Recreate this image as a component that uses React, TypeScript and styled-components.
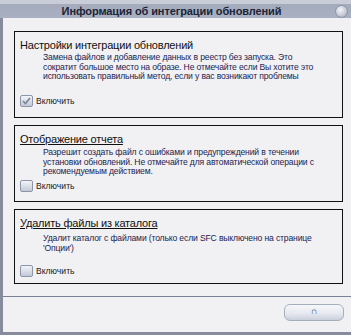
import React from 'react';
import styled, { createGlobalStyle } from 'styled-components';

const GlobalStyle = createGlobalStyle`
  html, body {
    margin: 0;
    padding: 0;
    background: #f1f1f4;
  }
  body {
    font-family: "Liberation Sans", Arial, sans-serif;
  }
`;

const Window = styled.div`
  width: 351px;
  height: 335px;
  box-sizing: border-box;
  display: flex;
  flex-direction: column;
  background: #f1f1f4;
  overflow: hidden;
`;

const TitleBar = styled.div`
  height: 14px;
  flex: none;
  border-top: 4px solid #c9cdd8;
  background: linear-gradient(#a4abbd, #a9b0c2);
  display: flex;
  align-items: center;
  justify-content: center;
  position: relative;
`;

const Title = styled.div`
  font-size: 11px;
  font-weight: bold;
  color: #1c2436;
  letter-spacing: -0.1px;
  margin-left: -8px;
`;

const Orb = styled.div`
  position: absolute;
  right: 3px;
  top: 1px;
  width: 11px;
  height: 11px;
  border-radius: 50%;
  border: 1px solid #8c94a6;
  background: radial-gradient(circle at 40% 35%, #f4f5f8 0%, #c8ccd6 55%, #9aa2b4 100%);
`;

const Body = styled.div`
  flex: 1;
  display: flex;
  flex-direction: column;
  border-left: 3px solid #868c9e;
  border-bottom: 3px solid #868c9e;
`;

const Content = styled.div`
  flex: 1;
  display: flex;
  flex-direction: column;
  gap: 7px;
  padding: 13px 8px 0 11px;
`;

const Section = styled.div<{ $h: number }>`
  height: ${p => p.$h}px;
  box-sizing: border-box;
  border: 1px solid #111;
  padding: 6px 0 0 5px;
  display: flex;
  flex-direction: column;
`;

const Heading = styled.div<{ $link?: boolean }>`
  font-size: 11px;
  line-height: 14px;
  color: #101010;
  text-decoration: ${p => (p.$link ? 'underline' : 'none')};
  letter-spacing: -0.2px;
`;

const Desc = styled.div<{ $mt?: number }>`
  font-size: 8.6px;
  line-height: 9.6px;
  color: #1c2450;
  margin: ${p => p.$mt ?? 1}px 0 0 23px;
  letter-spacing: -0.15px;
  flex: 1;
`;

const CheckRow = styled.label<{ $mb: number }>`
  display: flex;
  align-items: center;
  gap: 3px;
  font-size: 8.6px;
  color: #1a1a1a;
  margin-bottom: ${p => p.$mb}px;
`;

const Box = styled.span`
  width: 11px;
  height: 10px;
  border: 1px solid #8c96aa;
  border-radius: 2px;
  background: linear-gradient(#f2f4f8, #c2c9d6);
  display: flex;
  align-items: center;
  justify-content: center;
`;

const Footer = styled.div`
  height: 36px;
  flex: none;
  border-top: 1px solid #7c8296;
  display: flex;
  justify-content: flex-end;
  align-items: flex-start;
  padding: 7px 7px 0 0;
  box-sizing: border-box;
`;

const Button = styled.button`
  width: 60px;
  height: 17px;
  border: 1px solid #a6aebe;
  border-radius: 6px;
  background: linear-gradient(#f6f7fa 0%, #e6e9ef 55%, #c9d0dc 100%);
  font-family: "Liberation Sans", Arial, sans-serif;
  font-size: 9px;
  line-height: 9px;
  color: #3a4a80;
  padding: 2px 0 0;
  display: flex;
  justify-content: center;
  align-items: flex-start;
`;

const Check = () => (
  <svg width="9" height="8" viewBox="0 0 9 8">
    <path d="M1 4 L3.5 6.5 L8 1" fill="none" stroke="#7a8294" strokeWidth="1.6" />
  </svg>
);

export default function App() {
  return (
    <>
      <GlobalStyle />
      <Window>
        <TitleBar>
          <Title>Информация об интеграции обновлений</Title>
          <Orb />
        </TitleBar>
        <Body>
          <Content>
            <Section $h={87}>
              <Heading>Настройки интеграции обновлений</Heading>
              <Desc>
                Замена файлов и добавление данных в реестр без запуска. Это
                <br />
                сократит большое место на образе. Не отмечайте если Вы хотите это
                <br />
                использовать правильный метод, если у вас возникают проблемы
              </Desc>
              <CheckRow $mb={10}>
                <Box>
                  <Check />
                </Box>
                Включить
              </CheckRow>
            </Section>
            <Section $h={77}>
              <Heading $link>Отображение отчета</Heading>
              <Desc $mt={2}>
                Разрешит создать файл с ошибками и предупреждений в течении
                <br />
                установки обновлений. Не отмечайте для автоматической операции с
                <br />
                рекомендуемым действием.
              </Desc>
              <CheckRow $mb={9}>
                <Box />
                Включить
              </CheckRow>
            </Section>
            <Section $h={75}>
              <Heading $link>Удалить файлы из каталога</Heading>
              <Desc $mt={4}>
                Удалит каталог с файлами (только если SFC выключено на странице
                <br />
                'Опции')
              </Desc>
              <CheckRow $mb={6}>
                <Box />
                Включить
              </CheckRow>
            </Section>
          </Content>
          <Footer>
            <Button>∩</Button>
          </Footer>
        </Body>
      </Window>
    </>
  );
}
